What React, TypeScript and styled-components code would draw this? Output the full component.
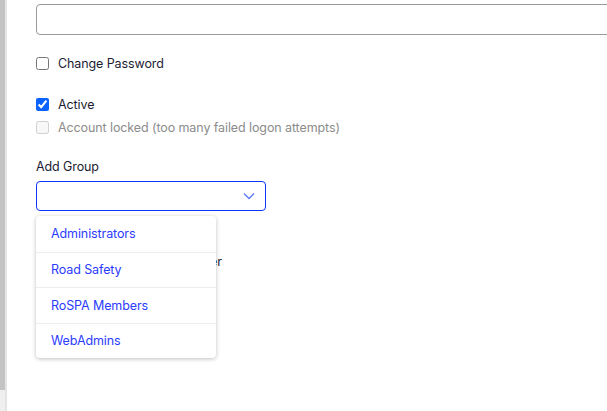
import styled, { createGlobalStyle } from "styled-components";

const GlobalStyle = createGlobalStyle`
  html, body {
    margin: 0;
    padding: 0;
    background: #fff;
  }
  body {
    font-family: Inter, "Noto Sans", sans-serif;
    font-size: 12.5px;
    letter-spacing: -0.1px;
    color: #1c1c33;
  }
`;

export const Page = styled.div`
  width: 607px;
  height: 411px;
  overflow: hidden;

  display: flex;
`;

export const Scrollbar = styled.div`
  width: 5px;
  flex-shrink: 0;
  background: #efefef;
  border-right: 2px solid #e4e4e4;

  display: flex;
  flex-direction: column;
`;

export const Thumb = styled.div`
  height: 390px;
  background: #c3c3c3;
`;

export const Content = styled.div`
  flex: 1;
  padding: 4px 0 0 29px;

  display: flex;
  flex-direction: column;
`;

export const TextInput = styled.input`
  width: 620px;
  height: 31px;
  box-sizing: border-box;
  border: 1px solid #9a9a9a;
  border-radius: 4px;
  outline: none;
  padding: 0 10px;
  font: inherit;
`;

export const Row = styled.label<{ $top: number; $disabled?: boolean }>`
  height: 18px;
  margin-top: ${(p) => p.$top}px;

  gap: 9px;
  display: flex;
  align-items: center;

  color: ${(p) => (p.$disabled ? "#8c8c8c" : "#1c1c33")};
  white-space: nowrap;
`;

export const Check = styled.input`
  margin: 0;
  width: 13px;
  height: 13px;
  accent-color: #0a62ff;
`;

export const Label = styled.div`
  margin-top: 22px;
  line-height: 18px;
`;

export const SelectWrap = styled.div`
  position: relative;
  width: 230px;
  margin-top: 5px;
`;

export const SelectBox = styled.div`
  height: 30px;
  box-sizing: border-box;
  border: 1px solid #0b34ff;
  border-radius: 4px;

  display: flex;
  align-items: center;
  justify-content: flex-end;
  padding-right: 10px;
`;

export const Menu = styled.ul`
  position: absolute;
  top: 35px;
  left: 0;
  width: 180px;
  margin: 0;
  padding: 0;
  list-style: none;
  background: #fff;
  border-radius: 4px;
  box-shadow: 0 1px 4px rgba(0, 0, 0, 0.25);
  z-index: 2;
`;

export const MenuItem = styled.li`
  height: 35.5px;
  box-sizing: border-box;
  padding-left: 15px;
  display: flex;
  align-items: center;
  color: #2b3cff;

  & + & {
    border-top: 1px solid #ececec;
  }
`;

const groups = ["Administrators", "Road Safety", "RoSPA Members", "WebAdmins"];

export default function App() {
  return (
    <>
      <GlobalStyle />
      <Page>
        <Scrollbar>
          <Thumb />
        </Scrollbar>
        <Content>
          <TextInput type="text" />

          <Row $top={19}>
            <Check type="checkbox" />
            Change Password
          </Row>

          <Row $top={23}>
            <Check type="checkbox" defaultChecked />
            Active
          </Row>
          <Row $top={5} $disabled>
            <Check type="checkbox" disabled />
            Account locked (too many failed logon attempts)
          </Row>

          <Label>Add Group</Label>
          <SelectWrap>
            <SelectBox>
              <svg width="12" height="8" viewBox="0 0 12 8" fill="none">
                <path d="M1 1.5l5 5 5-5" stroke="#5a78ff" strokeWidth="1.3" />
              </svg>
            </SelectBox>
            <Menu>
              {groups.map((g) => (
                <MenuItem key={g}>{g}</MenuItem>
              ))}
            </Menu>
          </SelectWrap>

          <Row $top={41}>
            <Check type="checkbox" />
            Send welcome email to user
          </Row>
        </Content>
      </Page>
    </>
  );
}
